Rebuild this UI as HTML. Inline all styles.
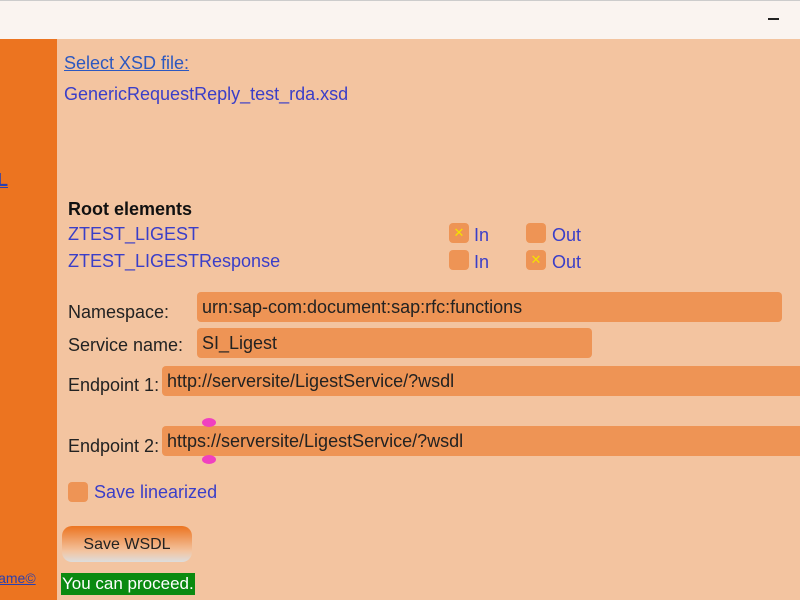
<!DOCTYPE html>
<html><head><style>
body{margin:0;width:800px;height:600px;overflow:hidden;background:#f3c4a0;font-family:"Liberation Sans","DejaVu Sans",sans-serif;position:relative}
.a{position:absolute;white-space:nowrap}
.top{left:0;top:0;width:800px;height:39px;background:#faf4f0;border-top:1px solid #ccc;box-sizing:border-box}
.side{left:0;top:39px;width:57px;height:561px;background:#ec7420}
.blue{color:#3a3ec8;font-size:18px}
.lbl{color:#222;font-size:18px}
.inp{background:#ee9455;border-radius:4px;height:30px;color:#222;font-size:18px;line-height:30px;padding-left:5px;box-sizing:border-box}
.cb{width:20px;height:20px;background:#ee9455;border-radius:4px;color:#f5e000;font-size:13px;text-align:center;line-height:20px;font-weight:bold}
</style></head><body>
<div class="a top"></div>
<div class="a" style="left:768px;top:18px;width:11px;height:1.5px;background:#222"></div>
<div class="a side"></div>
<div class="a" style="left:-3px;top:170px;color:#2a40b0;font-size:18px;font-weight:bold;text-decoration:underline">L</div>
<div class="a" style="left:-5px;top:570px;color:#2a40b0;font-size:14px;text-decoration:underline">lame©</div>
<div class="a blue" style="left:64px;top:53px;text-decoration:underline;color:#2c58c0">Select XSD file:</div>
<div class="a blue" style="left:64px;top:84px">GenericRequestReply_test_rda.xsd</div>
<div class="a" style="left:68px;top:199px;font-size:18px;font-weight:bold;color:#111">Root elements</div>
<div class="a blue" style="left:68px;top:224px">ZTEST_LIGEST</div>
<div class="a blue" style="left:68px;top:251px">ZTEST_LIGESTResponse</div>
<div class="a cb" style="left:449px;top:223px">✕</div><div class="a blue" style="left:474px;top:225px">In</div>
<div class="a cb" style="left:526px;top:223px"></div><div class="a blue" style="left:552px;top:225px">Out</div>
<div class="a cb" style="left:449px;top:250px"></div><div class="a blue" style="left:474px;top:252px">In</div>
<div class="a cb" style="left:526px;top:250px">✕</div><div class="a blue" style="left:552px;top:252px">Out</div>
<div class="a lbl" style="left:68px;top:302px">Namespace:</div>
<div class="a inp" style="left:197px;top:292px;width:585px">urn:sap-com:document:sap:rfc:functions</div>
<div class="a lbl" style="left:68px;top:335px">Service name:</div>
<div class="a inp" style="left:197px;top:328px;width:395px">SI_Ligest</div>
<div class="a lbl" style="left:68px;top:375px">Endpoint 1:</div>
<div class="a inp" style="left:162px;top:366px;width:650px">http://serversite/LigestService/?wsdl</div>
<div class="a lbl" style="left:68px;top:436px">Endpoint 2:</div>
<div class="a inp" style="left:162px;top:426px;width:650px">https://serversite/LigestService/?wsdl</div>
<div class="a" style="left:202px;top:418px;width:14px;height:9px;border-radius:50%;background:#f040c0"></div>
<div class="a" style="left:202px;top:455px;width:14px;height:9px;border-radius:50%;background:#f040c0"></div>
<div class="a cb" style="left:68px;top:482px"></div>
<div class="a blue" style="left:94px;top:482px">Save linearized</div>
<div class="a" style="left:62px;top:526px;width:130px;height:36px;border-radius:10px;background:linear-gradient(#ec7420,#f3c4a0 70%,#ddd);color:#222;font-size:16px;text-align:center;line-height:38px">Save WSDL</div>
<div class="a" style="left:61px;top:573px;background:#0a8a10;color:#fff;font-size:17px;padding:0 1px;height:22px;line-height:22px">You can proceed.</div>
</body></html>
